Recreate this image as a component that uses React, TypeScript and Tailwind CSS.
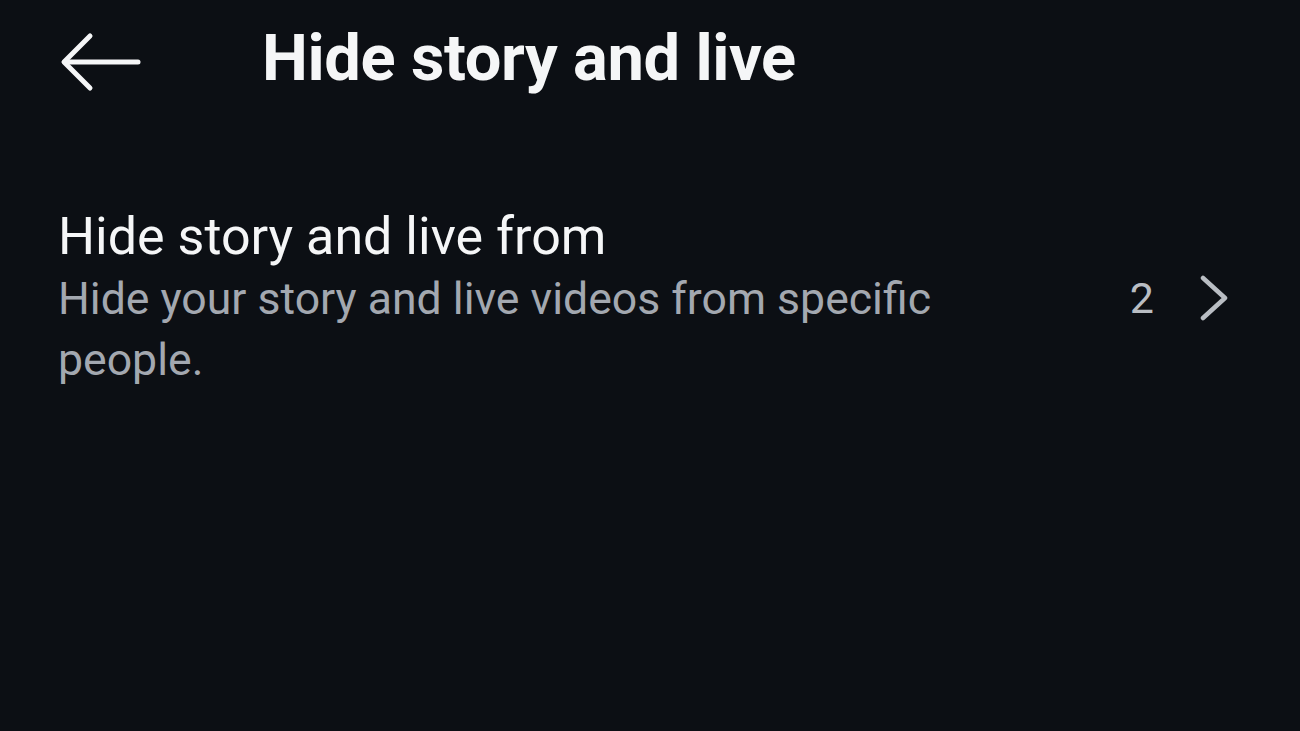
import React from "react";

export default function App() {
  return (
    <div
      className="w-[1300px] h-[731px] bg-[#0c0f14] text-[#f5f6f7] overflow-hidden"
      style={{ fontFamily: "Roboto, 'Noto Sans', sans-serif" }}
    >
      <header className="flex items-center h-[116px] pl-[60px]">
        <svg
          className="mt-[8px]"
          width="82"
          height="60"
          viewBox="0 0 82 60"
          fill="none"
          stroke="#f5f6f7"
          strokeWidth="5"
          strokeLinecap="round"
          strokeLinejoin="round"
        >
          <path d="M78 30H5" />
          <path d="M30 4L4 30l26 26" />
        </svg>
        <h1 className="ml-[120px] text-[65px] font-bold leading-none tracking-[-0.4px]">
          Hide story and live
        </h1>
      </header>

      <div className="flex items-center pl-[58px] pr-[71px] pt-[89px]">
        <div className="flex-1 max-w-[940px]">
          <div className="text-[52px] leading-[64px]">Hide story and live from</div>
          <div className="text-[44.6px] leading-[61px] text-[#a3a8b0]">
            Hide your story and live videos from specific people.
          </div>
        </div>
        <div className="ml-auto flex items-center gap-[45px] text-[#b9bdc3]">
          <span className="text-[43px] leading-none">2</span>
          <svg
            width="30"
            height="46"
            viewBox="0 0 30 46"
            fill="none"
            stroke="#b9bdc3"
            strokeWidth="4.5"
            strokeLinecap="round"
            strokeLinejoin="round"
          >
            <path d="M4 3l22 20L4 43" />
          </svg>
        </div>
      </div>
    </div>
  );
}
